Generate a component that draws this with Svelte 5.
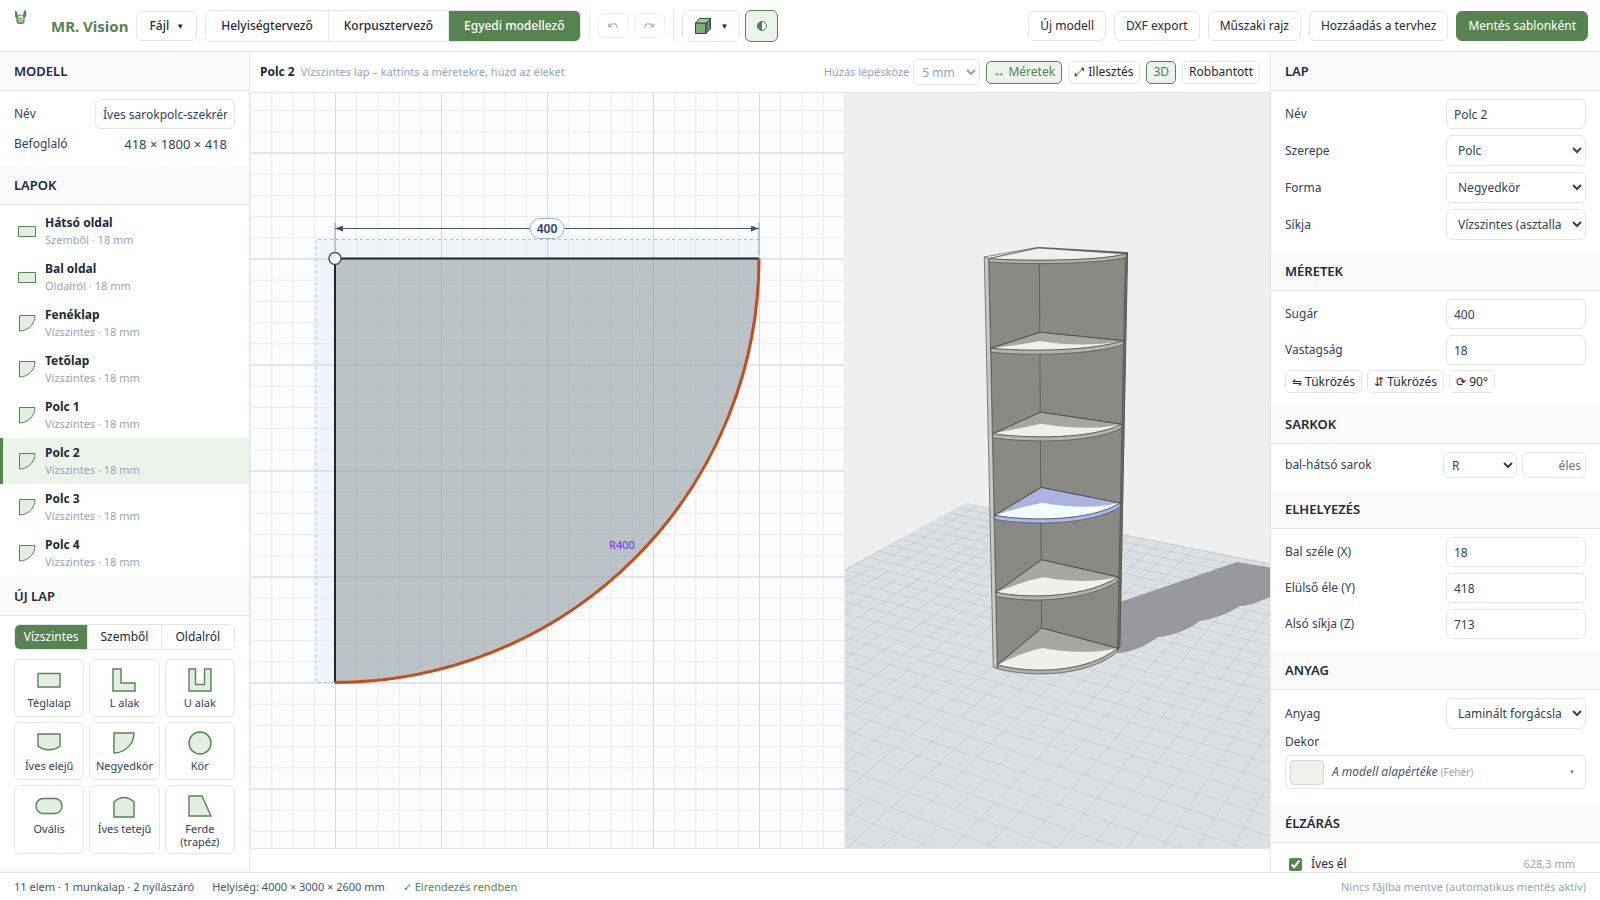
<script lang="ts">
  type Point = [number, number];

  interface Panel {
    name: string;
    plane: string;
    shape: string;
  }

  interface Shelf {
    back: Point;
    left: Point;
    right: Point;
    apex: Point;
    sagLeft: number;
    sagRight: number;
    thickness: number;
    selected?: boolean;
  }

  const modes = ['Helyiségtervező', 'Korpusztervező', 'Egyedi modellező'];
  const planes = ['Vízszintes', 'Szemből', 'Oldalról'];

  const panels: Panel[] = [
    { name: 'Hátsó oldal', plane: 'Szemből', shape: 'rect' },
    { name: 'Bal oldal', plane: 'Oldalról', shape: 'rect' },
    { name: 'Fenéklap', plane: 'Vízszintes', shape: 'quarter' },
    { name: 'Tetőlap', plane: 'Vízszintes', shape: 'quarter' },
    { name: 'Polc 1', plane: 'Vízszintes', shape: 'quarter' },
    { name: 'Polc 2', plane: 'Vízszintes', shape: 'quarter' },
    { name: 'Polc 3', plane: 'Vízszintes', shape: 'quarter' },
    { name: 'Polc 4', plane: 'Vízszintes', shape: 'quarter' }
  ];

  const shapes = [
    { label: 'Téglalap', path: 'M3 7.5h22v13.5h-22z' },
    { label: 'L alak', path: 'M3 3h8v14h14v8h-22z' },
    { label: 'U alak', path: 'M3 3h6.5v15.5h9V3H25v22H3z' },
    { label: 'Íves elejű', path: 'M3 5h22v12c-6 5-16 5-22 0z' },
    { label: 'Negyedkör', path: 'M4 4h20c0 11-9 20-20 20z' },
    { label: 'Kör', path: 'M14 3a11 11 0 1 0 0 22a11 11 0 1 0 0-22z' },
    { label: 'Ovális', path: 'M8 6.500h12a7 7.500 0 0 1 0 15h-12a7 7.500 0 0 1 0-15z' },
    { label: 'Íves tetejű', path: 'M4 25V10c6-6 14-6 20 0v15z' },
    { label: 'Ferde (trapéz)', path: 'M3 4h13l9 20H3z' }
  ];

  const shelves: Shelf[] = [
    { back: [245, 1195], left: [112, 1306], right: [473, 1256], apex: [248, 1255], sagLeft: 28, sagRight: 74, thickness: 11 },
    { back: [245, 990], left: [108, 1088], right: [475, 1042], apex: [250, 1043], sagLeft: 22, sagRight: 60, thickness: 12 },
    { back: [244, 773], left: [104, 857], right: [481, 820], apex: [247, 819], sagLeft: 18, sagRight: 56, thickness: 12, selected: true },
    { back: [242, 547], left: [98, 612], right: [485, 583], apex: [245, 582], sagLeft: 14, sagRight: 47, thickness: 12 },
    { back: [240, 307], left: [93, 355], right: [490, 332], apex: [240, 333], sagLeft: 11, sagRight: 32, thickness: 12 },
    { back: [235, 54], left: [86, 86], right: [500, 72], apex: [235, 54], sagLeft: 8, sagRight: 22, thickness: 10 }
  ];

  // Floor grid: every line runs to one of two vanishing points.
  const vanishLeft: Point = [-850, 135];
  const vanishRight: Point = [1646, 115];
  const floorLinesA = Array.from({ length: 34 }, (_, i) => 934 + (i - 5) * 62);
  const floorLinesB = Array.from({ length: 75 }, (_, i) => 1057 + (i - 20) * 35);

  let mode = $state('Egyedi modellező');
  let plane = $state('Vízszintes');
  let selected = $state('Polc 2');
  let modelName = $state('Íves sarokpolc-szekrény');
  let panelName = $state('Polc 2');
  let radius = $state('400');
  let thickness = $state('18');
  let posX = $state('18');
  let posY = $state('418');
  let posZ = $state('713');
  let curvedEdge = $state(true);
  let showSizes = $state(true);
  let show3d = $state(true);

  function frontCurve(shelf: Shelf, dy = 0): string {
    const [lx, ly] = shelf.left;
    const [rx, ry] = shelf.right;
    return `C${lx + 100} ${ly + shelf.sagLeft + dy} ${rx - 90} ${ry + shelf.sagRight + dy} ${rx} ${ry + dy}`;
  }

  function topPath(shelf: Shelf): string {
    return `M${shelf.back} L${shelf.left} ${frontCurve(shelf)}Z`;
  }

  function litPath(shelf: Shelf): string {
    const [rx, ry] = shelf.right;
    const [ax, ay] = shelf.apex;
    return `M${shelf.left} ${frontCurve(shelf)} C${rx - 70} ${ry + 16} ${ax + 80} ${ay + 14} ${ax} ${ay} Q${ax - 60} ${ay + 12} ${shelf.left}Z`;
  }

  function facePath(shelf: Shelf): string {
    const [lx, ly] = shelf.left;
    const [rx, ry] = shelf.right;
    const t = shelf.thickness;
    return `M${lx} ${ly + t} ${frontCurve(shelf, t)} L${rx} ${ry} C${rx - 90} ${ry + shelf.sagRight} ${lx + 100} ${ly + shelf.sagLeft} ${lx} ${ly}Z`;
  }
</script>

<div class="app">
  <header class="topbar">
    <svg class="logo" viewBox="0 0 28 28" aria-hidden="true">
      <path d="M2 0l5 5v5l4 1 7-1 2-8 3-2 2 6-1 7-3 4v8l-4 3H9l-4-3V17l-3-4z" fill="#5b8a57" />
      <path d="M8 13l8-2 3 3-1 9-5 2-4-2z" fill="#dbe8da" />
      <path d="M9 17h8M10 21h7M12 12l-2-4" stroke="#4f7f4b" stroke-width="1.5" fill="none" />
    </svg>
    <strong class="brand">MR. Vision</strong>
    <button class="btn file" type="button">Fájl <span class="caret">▼</span></button>

    <div class="segmented modes">
      {#each modes as item}
        <button type="button" class:active={mode === item} onclick={() => (mode = item)}>{item}</button>
      {/each}
    </div>

    <span class="divider"></span>
    <div class="history">
      <button class="btn mini" type="button" aria-label="Visszavonás" disabled>
        <svg viewBox="0 0 14 14"><path d="M2 4v4h4M2 8c2-4 10-6 10 2" /></svg>
      </button>
      <button class="btn mini" type="button" aria-label="Újra" disabled>
        <svg viewBox="0 0 14 14"><path d="M12 4v4h-4M12 8c-2-4-10-6-10 2" /></svg>
      </button>
    </div>
    <span class="divider tall"></span>

    <div class="view-tools">
      <button class="btn cube" type="button" aria-label="Nézet">
        <svg viewBox="0 0 18 18">
          <path d="M1.500 6h10.500v10.500h-10.500z" fill="#7faa79" />
          <path d="M1.500 6l4-4.500h11l-4.500 4.500z" fill="#a9c9a4" />
          <path d="M12 6l4.500-4.500v10l-4.500 5z" fill="#5b8a57" />
        </svg>
        <span class="caret">▼</span>
      </button>
      <button class="btn contrast" type="button" aria-label="Árnyékolás">
        <svg viewBox="0 0 12 12">
          <circle cx="6" cy="6" r="4.500" fill="#fff" stroke="#4f7f4b" />
          <path d="M6 1.500a4.500 4.500 0 0 0 0 9z" fill="#4f7f4b" />
        </svg>
      </button>
    </div>

    <div class="top-actions">
      <button class="btn" type="button">Új modell</button>
      <button class="btn" type="button">DXF export</button>
      <button class="btn" type="button">Műszaki rajz</button>
      <button class="btn" type="button">Hozzáadás a tervhez</button>
      <button class="btn primary" type="button">Mentés sablonként</button>
    </div>
  </header>

  <div class="workspace">
    <aside class="left">
      <h2>Modell</h2>
      <div class="body">
        <div class="row">
          <label for="model-name">Név</label>
          <input id="model-name" class="field" bind:value={modelName} />
        </div>
        <div class="row bounds">
          <span>Befoglaló</span>
          <span class="value">418 × 1800 × 418</span>
        </div>
      </div>

      <h2>Lapok</h2>
      <div class="panel-list">
        {#each panels as panel}
          <button
            type="button"
            class="panel-item"
            class:selected={selected === panel.name}
            onclick={() => (selected = panel.name)}
          >
            <svg viewBox="0 0 18 18" aria-hidden="true">
              <path d={panel.shape === 'rect' ? 'M.5 4.500h17v10H.5z' : 'M1.500 1.500H17C17 10 10 17 1.500 17z'} />
            </svg>
            <span>
              <b>{panel.name}</b>
              <small>{panel.plane} · 18 mm</small>
            </span>
          </button>
        {/each}
      </div>

      <h2>Új lap</h2>
      <div class="body new-panel">
        <div class="segmented planes">
          {#each planes as item}
            <button type="button" class:active={plane === item} onclick={() => (plane = item)}>{item}</button>
          {/each}
        </div>
        <div class="tiles">
          {#each shapes as shape}
            <button type="button" class="tile">
              <svg viewBox="0 0 28 28" aria-hidden="true"><path d={shape.path} /></svg>
              <span>{shape.label}</span>
            </button>
          {/each}
        </div>
      </div>
      <div class="list-end"></div>
    </aside>

    <main>
      <div class="toolbar">
        <strong>{selected}</strong>
        <span class="hint">Vízszintes lap – kattints a méretekre, húzd az éleket</span>
        <label class="step">
          Húzás lépésköze
          <select>
            <option>5 mm</option>
            <option>10 mm</option>
          </select>
        </label>
        <div class="toggles">
          <button class="btn small" class:on={showSizes} type="button" onclick={() => (showSizes = !showSizes)}>↔ Méretek</button>
          <button class="btn small" type="button">⤢ Illesztés</button>
          <button class="btn small" class:on={show3d} type="button" onclick={() => (show3d = !show3d)}>3D</button>
          <button class="btn small" type="button">Robbantott</button>
        </div>
      </div>

      <div class="views">
        <svg class="plan" viewBox="0 0 595 755" preserveAspectRatio="xMidYMid slice">
          <defs>
            <pattern id="minor" width="21.200" height="21.200" patternUnits="userSpaceOnUse" x="85" y="165.500">
              <path d="M0 0H21.200M0 0V21.200" stroke="#e6eaee" stroke-width="2" fill="none" />
            </pattern>
            <pattern id="major" width="106" height="106" patternUnits="userSpaceOnUse" x="85" y="165.500">
              <path d="M0 0H106M0 0V106" stroke="#d3d9df" stroke-width="2" fill="none" />
            </pattern>
            <marker id="arrow" viewBox="0 0 8 6" refX="8" refY="3" markerWidth="8" markerHeight="6" markerUnits="userSpaceOnUse" orient="auto-start-reverse">
              <path d="M0 0L8 3L0 6z" fill="#475569" />
            </marker>
          </defs>
          <rect width="595" height="755" fill="#fbfcfe" />
          <path d="M66 146.500H509V165.500H85V589.500H66z" fill="#f1f4f7" />
          <rect width="595" height="755" fill="url(#minor)" />
          <rect width="595" height="755" fill="url(#major)" />
          <path d="M509 146.500H66V589.500H85" fill="none" stroke="#b6c0cb" stroke-dasharray="3 3" />

          <path d="M85 165.500H509A424 424 0 0 1 85 589.500z" fill="#8f9fa1" fill-opacity="0.600" />
          <path d="M509 165.500H85V589.500" fill="none" stroke="#1e252e" stroke-width="2" />
          <path d="M509 165.500A424 424 0 0 1 85 589.500" fill="none" stroke="#cb4a17" stroke-width="3" />

          {#if showSizes}
            <path d="M85 129.500V158M509 129.500V162" stroke="#94a3b8" />
            <path d="M85 135.500H509" stroke="#475569" marker-start="url(#arrow)" marker-end="url(#arrow)" />
            <rect x="280" y="125.500" width="34" height="20" rx="10" fill="#fff" stroke="#93b4de" />
            <text x="297" y="140" class="dimension">400</text>
            <text x="372" y="456" class="radius">R400</text>
          {/if}
          <circle cx="85" cy="165.500" r="6" fill="#fff" stroke="#475569" stroke-width="1.500" />
        </svg>

        {#if show3d}
          <svg class="scene" viewBox="845 93 425 755" preserveAspectRatio="xMidYMid slice">
            <defs>
              <clipPath id="floor"><path d="M966 503L1270 563V848H845V569z" /></clipPath>
            </defs>
            <rect x="845" y="93" width="425" height="755" fill="#edeff1" />
            <g clip-path="url(#floor)">
              <rect x="845" y="493" width="425" height="355" fill="#dce0e3" />
              <path
                d="M1120 602L1237 562L1273 568V596C1262 600 1250 606 1240 606C1228 614 1212 619 1200 621C1188 630 1172 636 1158 637C1146 646 1130 653 1117 653z"
                fill="#98999d"
              />
              <g class="floor-lines">
                {#each floorLinesA as x}
                  <line x1={vanishLeft[0]} y1={vanishLeft[1]} x2={x} y2="848" />
                {/each}
                {#each floorLinesB as x}
                  <line x1={vanishRight[0]} y1={vanishRight[1]} x2={x} y2="848" />
                {/each}
              </g>
            </g>

            <!-- cabinet, drawn at three times its size on screen -->
            <g class="cabinet" transform="translate(960 230) scale(0.333)">
              <path d="M86 86L235 54L503 68L480 1250L473 1262L245 1290L112 1316z" fill="#8a8984" />
              <path d="M73 81L86 86L112 1316L100 1312z" fill="#c9c8c4" />
              <path d="M497 68L503 70L480 1250L473 1262z" fill="#6f6e6b" />
              <path d="M238 58L245 1195" fill="none" />
              {#each shelves as shelf, i}
                <g class:picked={shelf.selected}>
                  <path class="shade" class:open={i === 5} d={topPath(shelf)} />
                  {#if i < 5}
                    <path class="lit" d={litPath(shelf)} />
                    <path class="outline" d={topPath(shelf)} />
                  {/if}
                  <path class="face" d={facePath(shelf)} />
                </g>
              {/each}
              <path d="M73 81L235 52L503 68" fill="none" />
            </g>
          </svg>
        {/if}
      </div>
      <div class="view-footer"></div>
    </main>

    <aside class="right">
      <h2>Lap</h2>
      <div class="body">
        <div class="row">
          <label for="panel-name">Név</label>
          <input id="panel-name" class="field" bind:value={panelName} />
        </div>
        <div class="row">
          <label for="role">Szerepe</label>
          <select id="role" class="field"><option>Polc</option></select>
        </div>
        <div class="row">
          <label for="shape">Forma</label>
          <select id="shape" class="field"><option>Negyedkör</option></select>
        </div>
        <div class="row">
          <label for="plane">Síkja</label>
          <select id="plane" class="field"><option>Vízszintes (asztallap)</option></select>
        </div>
      </div>

      <h2>Méretek</h2>
      <div class="body">
        <div class="row">
          <label for="radius">Sugár</label>
          <input id="radius" class="field" bind:value={radius} />
        </div>
        <div class="row">
          <label for="thickness">Vastagság</label>
          <input id="thickness" class="field" bind:value={thickness} />
        </div>
        <div class="transforms">
          <button class="btn small" type="button">⇋ Tükrözés</button>
          <button class="btn small" type="button">⇵ Tükrözés</button>
          <button class="btn small" type="button">⟳ 90°</button>
        </div>
      </div>

      <h2>Sarkok</h2>
      <div class="body">
        <div class="row corner">
          <label for="corner">bal-hátsó sarok</label>
          <select id="corner" class="field"><option>R</option></select>
          <input class="field" placeholder="éles" aria-label="Sarok sugara" />
        </div>
      </div>

      <h2>Elhelyezés</h2>
      <div class="body">
        <div class="row">
          <label for="pos-x">Bal széle (X)</label>
          <input id="pos-x" class="field" bind:value={posX} />
        </div>
        <div class="row">
          <label for="pos-y">Elülső éle (Y)</label>
          <input id="pos-y" class="field" bind:value={posY} />
        </div>
        <div class="row">
          <label for="pos-z">Alsó síkja (Z)</label>
          <input id="pos-z" class="field" bind:value={posZ} />
        </div>
      </div>

      <h2>Anyag</h2>
      <div class="body material">
        <div class="row">
          <label for="material">Anyag</label>
          <select id="material" class="field"><option>Laminált forgácslap</option></select>
        </div>
        <span id="decor-label" class="decor-label">Dekor</span>
        <button class="decor" type="button" aria-labelledby="decor-label">
          <span class="swatch"></span>
          <em>A modell alapértéke</em>
          <small>(Fehér)</small>
          <span class="decor-caret">▼</span>
        </button>
      </div>

      <h2>Élzárás</h2>
      <div class="body edge">
        <label><input type="checkbox" bind:checked={curvedEdge} /> Íves él</label>
        <span>628,3 mm</span>
      </div>
    </aside>
  </div>

  <footer class="statusbar">
    <span>11 elem · 1 munkalap · 2 nyílászáró</span>
    <span>Helyiség: 4000 × 3000 × 2600 mm</span>
    <span class="ok">✓ Elrendezés rendben</span>
    <span class="save-state">Nincs fájlba mentve (automatikus mentés aktív)</span>
  </footer>
</div>

<style>
  :global(body) {
    margin: 0;
  }

  .app {
    --green: #568350;
    --green-soft: #ebf3ea;
    --line: #e2e5ea;
    --text: #1f2937;
    --muted: #94a3b8;
    display: grid;
    grid-template-rows: auto minmax(0, 1fr) auto;
    height: 100vh;
    overflow: hidden;
    background: #fff;
    color: var(--text);
    font: 12px/18px 'Noto Sans', 'Open Sans', sans-serif;
  }

  .app * {
    box-sizing: border-box;
  }

  button,
  input,
  select {
    font: inherit;
    color: inherit;
    margin: 0;
  }

  button {
    cursor: pointer;
  }

  .topbar {
    display: flex;
    align-items: center;
    gap: 8px;
    height: 52px;
    padding: 0 12px;
    border-bottom: 1px solid var(--line);
  }

  .logo {
    align-self: flex-start;
    width: 14px;
    height: 14px;
    margin: 10px 15px 0 2px;
  }

  .brand {
    color: var(--green);
    font-size: 15px;
    white-space: nowrap;
  }

  .btn {
    height: 30px;
    padding: 0 11px;
    border: 1px solid var(--line);
    border-radius: 6px;
    background: #fff;
    white-space: nowrap;
  }

  .file {
    padding: 0 12px;
    font-weight: 500;
  }

  .caret {
    margin-left: 4px;
    font-size: 8px;
    vertical-align: 1px;
  }

  .primary {
    border-color: var(--green);
    background: var(--green);
    color: #fff;
  }

  .segmented {
    display: flex;
    overflow: hidden;
    border: 1px solid var(--line);
    border-radius: 6px;
  }

  .segmented button {
    padding: 0 14px;
    border: 0;
    border-left: 1px solid var(--line);
    background: #fff;
  }

  .segmented button:first-child {
    border-left: 0;
  }

  .segmented button.active {
    background: var(--green);
    color: #fff;
  }

  .modes {
    height: 32px;
  }

  .modes button {
    padding: 0 15px;
    font-weight: 500;
    white-space: nowrap;
  }

  .divider {
    width: 1px;
    height: 25px;
    background: var(--line);
  }

  .tall {
    height: 32px;
  }

  .history,
  .view-tools,
  .top-actions {
    display: flex;
    align-items: center;
    gap: 5px;
  }

  .mini {
    display: grid;
    place-items: center;
    width: 31px;
    height: 25px;
    padding: 0;
    opacity: 0.6;
  }

  .mini svg {
    width: 12px;
    height: 12px;
    fill: none;
    stroke: #6b7280;
    stroke-width: 1.2;
  }

  .cube {
    display: flex;
    align-items: center;
    gap: 5px;
    height: 32px;
    padding: 0 11px;
  }

  .cube svg {
    width: 18px;
    height: 18px;
    stroke: #334b33;
    stroke-linejoin: round;
  }

  .contrast {
    display: grid;
    place-items: center;
    width: 33px;
    height: 32px;
    padding: 0;
    border-color: var(--green);
    background: var(--green-soft);
  }

  .contrast svg {
    width: 12px;
    height: 12px;
  }

  .top-actions {
    gap: 8px;
    margin-left: auto;
  }

  .workspace {
    display: grid;
    grid-template-columns: 250px minmax(0, 1fr) 330px;
    min-height: 0;
  }

  aside {
    min-height: 0;
    overflow: hidden;
  }

  .left {
    border-right: 1px solid var(--line);
  }

  .right {
    border-left: 1px solid var(--line);
  }

  h2 {
    height: 39px;
    margin: 0;
    padding: 0 14px;
    border-bottom: 1px solid var(--line);
    background: #fafafa;
    font-size: 13px;
    font-weight: 600;
    line-height: 38px;
    text-transform: uppercase;
  }

  .list-end {
    height: 39px;
    background: #fafafa;
  }

  .body {
    display: flex;
    flex-direction: column;
    gap: 6px;
    padding: 8px 14px 12px;
  }

  .row {
    display: flex;
    align-items: center;
    justify-content: space-between;
    color: #334155;
  }

  .field {
    width: 140px;
    height: 30px;
    padding: 0 7px;
    border: 1px solid var(--line);
    border-radius: 6px;
    outline: 0;
    background: #fff;
  }

  select.field {
    height: 31px;
  }

  .bounds {
    height: 18px;
    margin-bottom: 1px;
  }

  .bounds .value {
    padding-right: 8px;
    font-size: 13px;
  }

  .panel-list {
    padding: 3px 0 1px;
  }

  .panel-item {
    display: flex;
    align-items: center;
    gap: 9px;
    width: 100%;
    height: 46px;
    padding: 0 15px;
    border: 0;
    border-left: 3px solid transparent;
    background: none;
    text-align: left;
  }

  .panel-item.selected {
    border-left-color: var(--green);
    background: var(--green-soft);
  }

  .panel-item svg {
    width: 18px;
    height: 18px;
    overflow: visible;
  }

  .panel-item path,
  .tile path {
    fill: #e2efe0;
    stroke: var(--green);
  }

  .panel-item b,
  .panel-item small {
    display: block;
  }

  .panel-item small {
    color: var(--muted);
    font-size: 11px;
    line-height: 16px;
  }

  .new-panel {
    gap: 9px;
  }

  .planes {
    height: 26px;
  }

  .planes button {
    flex: 1;
    padding: 0;
  }

  .tiles {
    display: grid;
    grid-template-columns: repeat(3, 1fr);
    gap: 5px;
  }

  .tile {
    display: flex;
    flex-direction: column;
    align-items: center;
    gap: 2px;
    min-height: 58px;
    padding: 6px 4px 5px;
    border: 1px solid var(--line);
    border-radius: 6px;
    background: #fff;
    color: #334155;
    font-size: 11px;
    line-height: 13px;
  }

  .tile svg {
    width: 28px;
    height: 28px;
  }

  .tile path {
    stroke-width: 1.4;
  }

  main {
    display: flex;
    flex-direction: column;
    min-width: 0;
    min-height: 0;
  }

  .toolbar {
    display: flex;
    align-items: center;
    gap: 6px;
    height: 41px;
    padding: 0 10px;
    border-bottom: 1px solid var(--line);
    white-space: nowrap;
  }

  .hint,
  .step {
    color: var(--muted);
    font-size: 11px;
  }

  .step {
    display: flex;
    align-items: center;
    gap: 4px;
    margin-left: auto;
  }

  .step select {
    width: 67px;
    height: 26px;
    padding: 0 4px;
    border: 1px solid var(--line);
    border-radius: 5px;
    background: #fff;
    font-size: 12px;
  }

  .toggles {
    display: flex;
    gap: 6px;
  }

  .small {
    height: 23px;
    padding: 0 6px;
    border-radius: 5px;
    line-height: 20px;
  }

  .on {
    border-color: var(--green);
    background: var(--green-soft);
    color: var(--green);
  }

  .views {
    display: flex;
    flex: 1;
    min-height: 0;
  }

  .views svg {
    display: block;
    min-width: 0;
    height: 100%;
  }

  .plan {
    flex: 7 1 0;
  }

  .scene {
    flex: 5 1 0;
  }

  .dimension {
    fill: #1e3a8a;
    font-size: 12px;
    font-weight: 600;
    text-anchor: middle;
  }

  .radius {
    fill: #7c3aed;
    font-size: 11px;
    font-weight: 500;
    text-anchor: middle;
  }

  .floor-lines {
    stroke: #8b959c;
    stroke-opacity: 0.28;
    stroke-width: 0.8;
  }

  .cabinet path {
    stroke: #4b4a48;
    stroke-width: 2;
    stroke-linejoin: round;
  }

  .cabinet .shade {
    fill: #a7a6a1;
  }

  .cabinet .open {
    fill: #f0efeb;
  }

  .cabinet .lit {
    fill: #f0efeb;
    stroke: none;
  }

  .cabinet .outline {
    fill: none;
  }

  .cabinet .face {
    fill: #b3b2ad;
  }

  .cabinet .picked .shade {
    fill: #aab3e2;
  }

  .cabinet .picked .lit {
    fill: #f2fbff;
  }

  .cabinet .picked .face {
    fill: #aab8ee;
  }

  .view-footer {
    height: 24px;
    border-top: 1px solid var(--line);
  }

  .transforms {
    display: flex;
    gap: 5px;
    margin-top: -1px;
  }

  .corner {
    gap: 5px;
  }

  .corner label {
    flex: 1;
  }

  .corner select.field {
    width: 74px;
    height: 26px;
    padding: 0 4px;
  }

  .corner input {
    width: 64px;
    height: 26px;
    padding: 0 4px;
    text-align: right;
  }

  .material {
    gap: 5px;
    padding-bottom: 15px;
  }

  .decor-label {
    color: #334155;
    line-height: 16px;
  }

  .decor {
    display: flex;
    align-items: center;
    height: 34px;
    padding: 0 10px 0 4px;
    border: 1px solid var(--line);
    border-radius: 6px;
    background: #fff;
    color: #475569;
    text-align: left;
  }

  .swatch {
    width: 34px;
    height: 25px;
    margin-right: 8px;
    border: 1px solid #d9d6d0;
    border-radius: 4px;
    background: #f2f0ec;
  }

  .decor small {
    margin-left: 3px;
    color: var(--muted);
    font-size: 10px;
  }

  .decor-caret {
    margin-left: auto;
    color: #64748b;
    font-size: 6px;
  }

  .edge {
    flex-direction: row;
    justify-content: space-between;
    padding: 12px 25px 12px 18px;
  }

  .edge label {
    display: flex;
    align-items: center;
    gap: 9px;
  }

  .edge input {
    width: 13px;
    height: 13px;
    accent-color: var(--green);
  }

  .edge span {
    color: var(--muted);
    font-size: 11px;
  }

  .statusbar {
    display: flex;
    align-items: center;
    gap: 18px;
    height: 28px;
    padding: 0 14px;
    border-top: 1px solid var(--line);
    background: #fff;
    color: #475569;
    font-size: 11px;
    white-space: nowrap;
  }

  .ok {
    color: var(--green);
  }

  .save-state {
    margin-left: auto;
    color: var(--muted);
  }
</style>
